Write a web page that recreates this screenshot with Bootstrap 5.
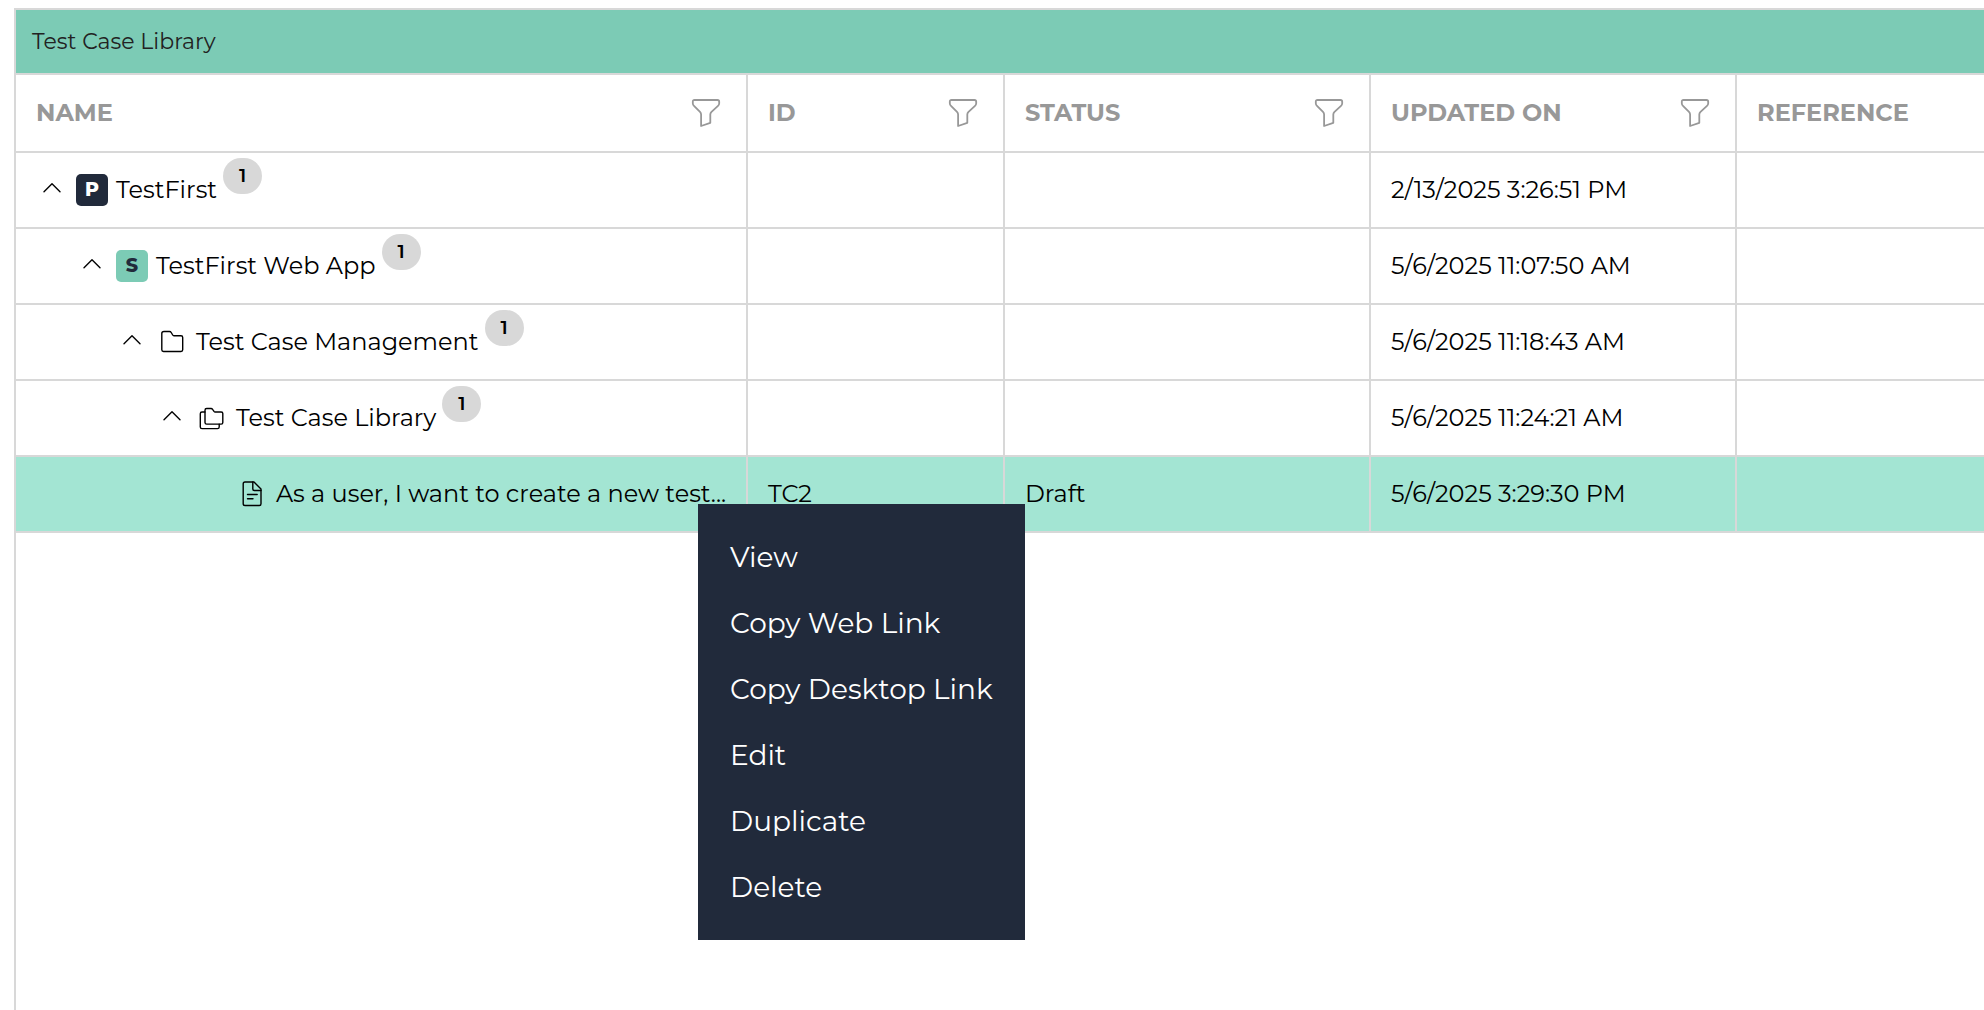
<!DOCTYPE html>
<html lang="en">
<head>
<meta charset="utf-8">
<meta name="viewport" content="width=device-width, initial-scale=1">
<title>Test Case Library</title>
<link rel="stylesheet" href="https://cdn.jsdelivr.net/npm/bootstrap@5.3.0/dist/css/bootstrap.min.css">
<style>
  :root { --line: #d8d8d8; --teal: #7ccbb5; --mint: #a3e5d3; --navy: #212a3b; --muted-head: #989898; }
  body { font-family: Montserrat, Inter, sans-serif; font-size: 24px; line-height: 32px; color: #000; background: #fff; padding: 8px 0 0 14px; }
  .library-panel { min-height: calc(100vh - 8px); border-left: 2px solid var(--line); border-top: 2px solid var(--line); }
  .panel-title { background: var(--teal); border-bottom: 2px solid var(--line); color: #222; font-size: 22px; font-weight: 400; height: 65px; padding: 2px 16px 0; }
  .tree-grid { table-layout: fixed; border-collapse: separate; border-spacing: 0; width: 100%; }
  .tree-grid th, .tree-grid td { border-right: 2px solid var(--line); border-bottom: 2px solid var(--line); padding: 0 20px; height: 76px; white-space: nowrap; }
  .tree-grid th { height: 78px; color: var(--muted-head); font-weight: 700; padding-right: 24px; }
  .tree-grid th:last-child, .tree-grid td:last-child { border-right: 0; }
  .tree-grid td:first-child { padding-right: 0; }
  .col-name { width: 732px; } .col-id { width: 257px; } .col-wide { width: 366px; }
  .row-selected td { background: var(--mint); }
  .node { height: 74px; gap: 8px; }
  .level-1 { padding-left: 40px; } .level-2 { padding-left: 80px; } .level-3 { padding-left: 120px; } .level-4 { padding-left: 200px; }
  .icon-btn { background: none; border: 0; padding: 0; color: inherit; line-height: 0; }
  .node svg { width: 32px; height: 32px; fill: none; stroke: #000; stroke-width: 1.4; stroke-linejoin: round; stroke-linecap: round; display: block; flex: none; }
  .filter-btn svg { width: 32px; height: 32px; fill: none; stroke: var(--muted-head); stroke-width: 1.8; stroke-linejoin: round; display: block; }
  .type-tile { width: 32px; height: 32px; border-radius: 5px; font-size: 19px; font-weight: 800; line-height: 32px; text-align: center; flex: none; }
  .tile-p { background: var(--navy); color: #fff; }
  .tile-s { background: var(--teal); color: var(--navy); }
  .count-pill { width: 39px; height: 36px; margin: 5px 0 0 -2px; border-radius: 18px; background: var(--line); font-size: 19px; font-weight: 600; line-height: 36px; text-align: center; }
  .context-menu { --bs-dropdown-font-size: 28px; left: 698px; top: 504px; min-width: 327px; padding: 20px 0; border: 0; border-radius: 0; background: var(--navy); }
  .context-menu .dropdown-item { color: #fff; font-weight: 400; line-height: 34px; padding: 16px 32px; }
  .context-menu .dropdown-item:hover { background: #303b50; }
</style>
<script src="https://cdn.jsdelivr.net/npm/bootstrap@5.3.0/dist/js/bootstrap.bundle.min.js"></script>
</head>
<body class="overflow-hidden">
<svg class="d-none">
  <symbol id="i-chevron" viewBox="0 0 32 32"><path d="M8 17.800l8-8 8 8"/></symbol>
  <symbol id="i-filter" viewBox="0 0 32 32"><path d="M4.500 3h23c1.100 0 1.700.7 1.700 1.700v1.500c0 1-.4 2-1.200 2.700l-6.500 6c-.8.800-1.200 1.600-1.200 2.600v8.300l-9.200 3.200V17.500c0-1-.4-1.900-1.100-2.600L4 8.900C3.200 8.200 2.800 7.200 2.800 6.200V4.700C2.800 3.700 3.400 3 4.500 3z"/></symbol>
</svg>
<main class="library-panel">
  <h1 class="panel-title d-flex align-items-center m-0">Test Case Library</h1>
  <table class="tree-grid">
    <colgroup><col class="col-name"><col class="col-id"><col class="col-wide"><col class="col-wide"><col></colgroup>
    <thead>
      <tr>
        <th scope="col"><div class="d-flex justify-content-between align-items-center">NAME<button type="button" class="icon-btn filter-btn" aria-label="Filter name"><svg><use href="#i-filter"/></svg></button></div></th>
        <th scope="col"><div class="d-flex justify-content-between align-items-center">ID<button type="button" class="icon-btn filter-btn" aria-label="Filter ID"><svg><use href="#i-filter"/></svg></button></div></th>
        <th scope="col"><div class="d-flex justify-content-between align-items-center">STATUS<button type="button" class="icon-btn filter-btn" aria-label="Filter status"><svg><use href="#i-filter"/></svg></button></div></th>
        <th scope="col"><div class="d-flex justify-content-between align-items-center">UPDATED ON<button type="button" class="icon-btn filter-btn" aria-label="Filter updated on"><svg><use href="#i-filter"/></svg></button></div></th>
        <th scope="col">REFERENCE</th>
      </tr>
    </thead>
    <tbody>
      <tr>
        <td><div class="node d-flex align-items-center"><button type="button" class="icon-btn" aria-label="Collapse"><svg><use href="#i-chevron"/></svg></button><span class="type-tile tile-p">P</span><span>TestFirst</span><span class="count-pill align-self-start">1</span></div></td>
        <td></td><td></td><td>2/13/2025 3:26:51 PM</td><td></td>
      </tr>
      <tr>
        <td><div class="node level-1 d-flex align-items-center"><button type="button" class="icon-btn" aria-label="Collapse"><svg><use href="#i-chevron"/></svg></button><span class="type-tile tile-s">S</span><span>TestFirst Web App</span><span class="count-pill align-self-start">1</span></div></td>
        <td></td><td></td><td>5/6/2025 11:07:50 AM</td><td></td>
      </tr>
      <tr>
        <td><div class="node level-2 d-flex align-items-center"><button type="button" class="icon-btn" aria-label="Collapse"><svg><use href="#i-chevron"/></svg></button><svg viewBox="0 0 32 32"><path d="M8 5.500h5.500c.8 0 1.300.3 1.700 1l1.500 2.500c.3.500.6.700 1.200.7H25c1 0 1.700.8 1.700 1.700v12.400c0 1-.7 1.700-1.700 1.700H7.500c-1 0-1.700-.7-1.700-1.700V7.500c0-1.200.9-2 2.200-2z"/></svg><span>Test Case Management</span><span class="count-pill align-self-start">1</span></div></td>
        <td></td><td></td><td>5/6/2025 11:18:43 AM</td><td></td>
      </tr>
      <tr>
        <td><div class="node level-3 d-flex align-items-center"><button type="button" class="icon-btn" aria-label="Collapse"><svg><use href="#i-chevron"/></svg></button><svg viewBox="0 0 32 32"><path d="M10.700 6.500h4.300c.8 0 1.200.3 1.600.9l1.400 2c.3.400.6.600 1.200.6h6c1 0 1.600.7 1.600 1.600v8.900c0 1-.7 1.600-1.600 1.600H10.700c-1 0-1.700-.7-1.700-1.600V8.200c0-1 .7-1.700 1.700-1.700z"/><path d="M9 10H6c-1 0-1.700.7-1.700 1.700v13.200c0 1 .7 1.700 1.700 1.700h15.500c1 0 1.700-.7 1.700-1.700v-2.600"/></svg><span>Test Case Library</span><span class="count-pill align-self-start">1</span></div></td>
        <td></td><td></td><td>5/6/2025 11:24:21 AM</td><td></td>
      </tr>
      <tr class="row-selected">
        <td><div class="node level-4 d-flex align-items-center"><svg viewBox="0 0 32 32"><path d="M9 4h9l7 7v14.700c0 1-.7 1.800-1.700 1.800H9c-1 0-1.800-.8-1.800-1.800V5.800C7.200 4.800 8 4 9 4z"/><path d="M16.800 4v7c0 .9.600 1.500 1.500 1.500H25M11.500 16.500h9.700M11.500 20.700h5.500"/></svg><span>As a user, I want to create a new test...</span></div></td>
        <td>TC2</td><td>Draft</td><td>5/6/2025 3:29:30 PM</td><td></td>
      </tr>
    </tbody>
  </table>
</main>
<div class="dropdown-menu context-menu show">
  <button type="button" class="dropdown-item">View</button>
  <button type="button" class="dropdown-item">Copy Web Link</button>
  <button type="button" class="dropdown-item">Copy Desktop Link</button>
  <button type="button" class="dropdown-item">Edit</button>
  <button type="button" class="dropdown-item">Duplicate</button>
  <button type="button" class="dropdown-item">Delete</button>
</div>
</body>
</html>
